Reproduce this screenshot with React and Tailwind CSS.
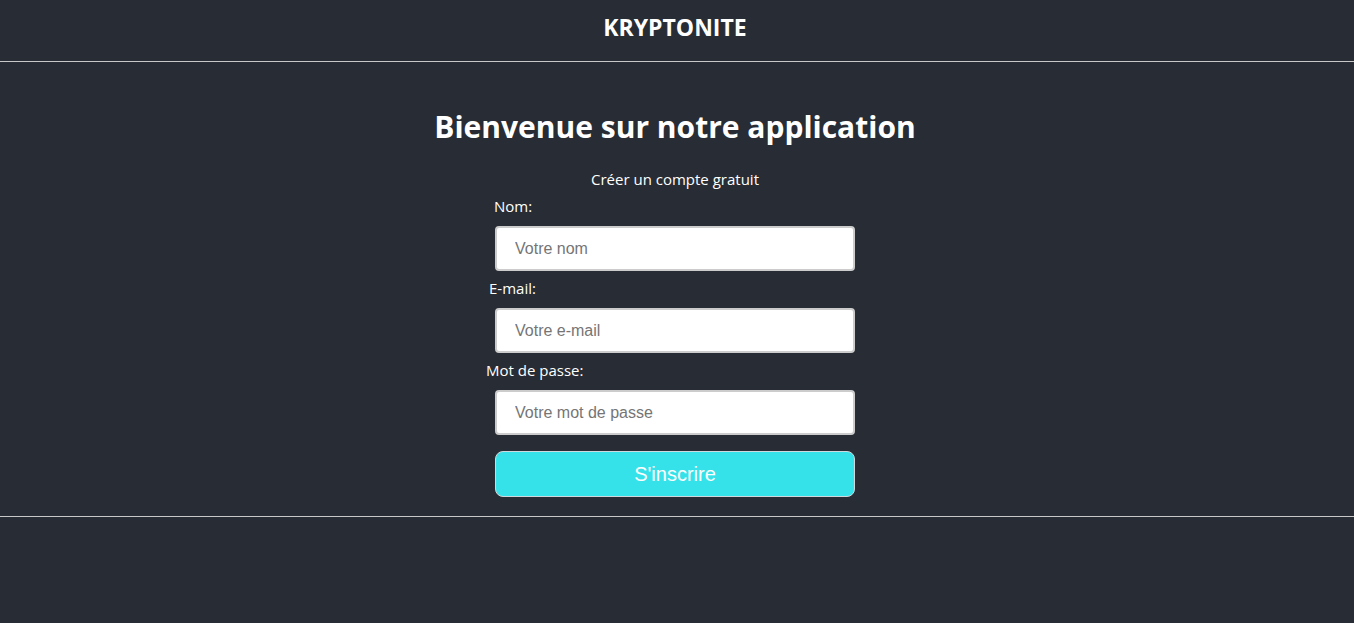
import React from 'react';

const sans = { fontFamily: '"Open Sans", "Noto Sans", sans-serif' };

function Field({ label, placeholder, type = 'text', offset }) {
  return (
    <>
      <label className={`block text-[15px] leading-5 text-white ${offset}`}>{label}</label>
      <input
        type={type}
        placeholder={placeholder}
        className="mt-[10px] block h-[45px] w-[360px] rounded-[4px] border-2 border-[#cccccc] bg-white px-[18px] text-[16px] text-[#333] placeholder:text-[#757575] outline-none font-['Liberation_Sans',Arial,sans-serif]"
      />
    </>
  );
}

export default function App() {
  return (
    <div className="min-h-[623px] w-full bg-[#282c34] text-white" style={sans}>
      {/* Header */}
      <header className="flex h-[62px] items-start justify-center border-b border-[#c8c8c8] pr-1">
        <span className="mt-[12px] text-[23px] font-bold leading-[30px]">KRYPTONITE</span>
      </header>

      {/* Main */}
      <main className="flex flex-col items-center border-b border-[#c8c8c8] pb-[19px] pr-1">
        <h1 className="mt-[45px] text-[30px] font-bold leading-[40px]">Bienvenue sur notre application</h1>
        <p className="mt-[22px] text-[15px] leading-5">Créer un compte gratuit</p>

        <form className="mt-[7px] w-[360px]" onSubmit={(e) => e.preventDefault()}>
          <Field label="Nom:" placeholder="Votre nom" offset="-ml-[1px]" />
          <div className="mt-[7px]" />
          <Field label="E-mail:" placeholder="Votre e-mail" type="email" offset="-ml-[6px]" />
          <div className="mt-[7px]" />
          <Field label="Mot de passe:" placeholder="Votre mot de passe" type="password" offset="-ml-[9px]" />
          <button
            type="submit"
            className="mt-[16px] block h-[46px] w-[360px] rounded-[8px] border border-[#cfd8dc] bg-[#36e2e9] text-[20px] text-white font-['Liberation_Sans',Arial,sans-serif]"
          >
            S'inscrire
          </button>
        </form>
      </main>
    </div>
  );
}
